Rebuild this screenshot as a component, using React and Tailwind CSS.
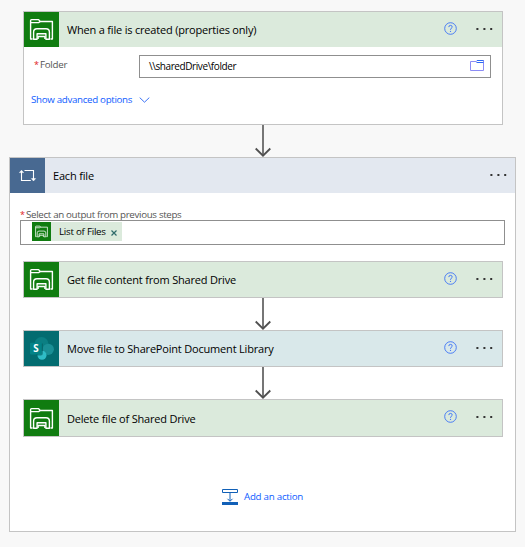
import React from "react";

function FileSystemIcon({ className }) {
  return (
    <svg className={className} viewBox="0 0 35 35" fill="none" stroke="#fff" strokeWidth="1.4" strokeLinejoin="round">
      <path d="M8.6 27H6.6V8.5Q6.6 7.6 7.5 7.6H14.6L16.2 9.5H28.4V27H26.5" />
      <path d="M7 10.6H14.6L16.2 9.5" />
      <path d="M9.6 27.3V20Q9.6 16.7 13 16.7H22Q25.4 16.7 25.4 20V27.3H21.9V21.7H13.1V27.3Z" />
      <path d="M14.1 27V24.5H20.9V27" />
    </svg>
  );
}

function SharePointIcon({ className }) {
  return (
    <svg className={className} viewBox="0 0 35 35">
      <circle cx="17.5" cy="13" r="6.9" fill="#0b7f83" />
      <circle cx="24.3" cy="18.3" r="5.6" fill="#1a8f95" />
      <circle cx="18" cy="24.2" r="4.5" fill="#2fbcc6" />
      <path d="M8 12.6H18.8V22.5Q18.8 24.5 16.8 24.5H13.5Q12 24 11.5 23H8Z" fill="#024f53" opacity=".55" />
      <rect x="6" y="11.8" width="11.8" height="11.6" rx=".8" fill="#038387" />
      <text x="11.9" y="21.3" textAnchor="middle" fill="#fff" fontFamily="'Open Sans', sans-serif" fontSize="9.8" fontWeight="700">S</text>
    </svg>
  );
}

function LoopIcon() {
  return (
    <svg className="size-[35px]" viewBox="0 0 35 35" fill="none" stroke="#fff" strokeWidth="1.1">
      <path d="M11.5 13V22.5H20.8M14.5 12.5H23.5V22" />
      <path d="M9.4 14.6L11.5 12.2L13.6 14.6ZM21.4 20.6L23.5 23L25.6 20.6Z" fill="#fff" strokeWidth=".5" />
    </svg>
  );
}

function HelpIcon() {
  return (
    <svg className="size-[13px] shrink-0" viewBox="0 0 13 13" fill="none" stroke="#3b72f6">
      <circle cx="6.5" cy="6.5" r="5.8" strokeWidth=".9" />
      <path d="M4.8 5.1Q4.8 3.4 6.5 3.4Q8.2 3.4 8.2 4.9Q8.2 5.7 7.3 6.3Q6.5 6.9 6.5 7.8" strokeWidth=".95" />
      <path d="M6.5 8.9V9.9" strokeWidth="1.1" />
    </svg>
  );
}

function Dots() {
  return (
    <svg className="h-[3px] w-[17px] shrink-0" viewBox="0 0 17 3" fill="#333">
      <rect x=".4" y="1" width="2" height="2" />
      <rect x="7.4" y="1" width="2" height="2" />
      <rect x="14.2" y="1" width="2" height="2" />
    </svg>
  );
}

function Asterisk() {
  return <span className="mr-[2px] w-[4px] text-[9px] tracking-tighter text-[#e02020]">*</span>;
}

function Arrow() {
  return (
    <svg className="ml-[254px] block h-8 w-[18px]" viewBox="0 0 18 32" fill="none">
      <path d="M9 0V31" stroke="#767676" strokeWidth="2" />
      <path d="M1.7 23.5L9 30.7L16.3 23.5" stroke="#505050" strokeWidth="1.8" />
    </svg>
  );
}

function Header({ icon, iconBg, title, className }) {
  return (
    <div className={`flex items-center pr-[9px] ${className}`}>
      <div className={`flex h-full w-[35px] shrink-0 items-center justify-center ${iconBg}`}>{icon}</div>
      <span className="ml-2 flex-1 pt-px text-[11px] leading-4 tracking-[-0.19px] whitespace-nowrap text-black">{title}</span>
      <div className="mb-[3px] flex items-center gap-[19px]">
        <HelpIcon />
        <Dots />
      </div>
    </div>
  );
}

export default function App() {
  const fileIcon = <FileSystemIcon className="size-[35px]" />;
  return (
    <div className="h-[547px] w-[525px] overflow-hidden bg-[#f8f8f8] pt-[11px] font-['Open_Sans','Noto_Sans',sans-serif]">
      <section className="ml-[23px] h-[114px] w-[480px] border border-[#c4c4c4] bg-white">
        <Header icon={fileIcon} iconBg="bg-[#107c10]" title="When a file is created (properties only)" className="h-[35px] bg-[#dbeadc]" />
        <div className="mt-2 flex h-[23px] items-start pl-[10px]">
          <label className="flex w-[105px] pt-[3px] text-[9.75px] leading-[14px] tracking-[-0.27px] text-[#555]">
            <Asterisk />Folder
          </label>
          <div className="flex h-[23px] w-[352px] items-center justify-between border border-[#8f8f8f] pr-[6px] pl-[9px]">
            <span className="mb-[2px] text-[10px] leading-4 tracking-[-0.42px] text-black">\\sharedDrive\folder</span>
            <svg className="mb-[2px] h-[11px] w-[14px]" viewBox="0 0 14 11" fill="none" stroke="#8c8cf5">
              <path d="M.5 10.5V1.5H6L7.5 .5H13.5V10.5Z" />
              <path d="M6.5 2.5H13.5M7 .5H13.5" stroke="#2f6bf5" />
            </svg>
          </div>
        </div>
        <div className="mt-[14px] ml-[7px] flex items-center text-[9.75px] leading-4 tracking-[-0.32px] text-[#0f5cff]">
          <span>Show advanced options</span>
          <svg className="mb-px ml-[7px] h-[6px] w-[11px]" viewBox="0 0 11 6" fill="none" stroke="#3b72f6">
            <path d="M.7 .6L5.5 5.2L10.3 .6" />
          </svg>
        </div>
      </section>

      <Arrow />

      <section className="ml-[9px] h-[375px] w-[507px] border border-[#c4c4c4] bg-white">
        <div className="flex h-[35px] items-center bg-[#e3e8f0] pr-[8px]">
          <div className="h-full w-[35px] bg-[#486991]"><LoopIcon /></div>
          <span className="ml-2 flex-1 pt-px text-[11px] leading-4 tracking-[-0.18px] text-black">Each file</span>
          <div className="mb-[2px]"><Dots /></div>
        </div>

        <div className="mt-[14px] ml-[10px] w-[485px]">
          <div className="flex h-[13px] pt-px text-[9.75px] leading-[14px] tracking-[-0.33px] text-[#555]">
            <Asterisk />Select an output from previous steps
          </div>
          <div className="flex h-[25px] border border-[#8f8f8f] pt-px pl-[11px]">
            <div className="flex h-[19px] w-[90px] items-center bg-[#dbeadc]">
              <div className="size-[19px] bg-[#107c10]"><FileSystemIcon className="size-[19px]" /></div>
              <span className="ml-2 text-[9.75px] leading-4 tracking-[-0.25px] whitespace-nowrap text-black">List of Files</span>
              <svg className="mt-[2px] ml-[5px] size-[6px]" viewBox="0 0 6 6" stroke="#2e6a6a" strokeWidth="1.2">
                <path d="M.5 .5L5.5 5.5M5.5 .5L.5 5.5" />
              </svg>
            </div>
          </div>
        </div>

        <div className="mt-4 ml-[13px] w-[480px]">
          <Header icon={fileIcon} iconBg="bg-[#107c10]" title="Get file content from Shared Drive" className="h-[37px] border border-[#c4c4c4] bg-[#dbeadc]" />
          <div className="-ml-[23px]"><Arrow /></div>
          <Header icon={<SharePointIcon className="size-[35px]" />} iconBg="bg-[#036c70]" title="Move file to SharePoint Document Library" className="h-[37px] border border-[#c4c4c4] bg-[#d9e8ea]" />
          <div className="-ml-[23px]"><Arrow /></div>
          <Header icon={fileIcon} iconBg="bg-[#107c10]" title="Delete file of Shared Drive" className="h-[38px] border border-[#c4c4c4] bg-[#dbeadc]" />
        </div>

        <div className="mt-[52px] ml-[212px] flex h-4 items-center">
          <svg className="size-4" viewBox="0 0 16 16" fill="none" stroke="#1160b7">
            <path d="M.5 .5H15.5V3.5H.5ZM8 4V12M5.5 9.8L8 12.3L10.5 9.8" />
            <path d="M0 14.5H16" strokeWidth="3" />
          </svg>
          <span className="mb-px ml-[6px] text-[9.75px] leading-4 tracking-[-0.26px] text-[#0f5cff]">Add an action</span>
        </div>
      </section>
    </div>
  );
}
